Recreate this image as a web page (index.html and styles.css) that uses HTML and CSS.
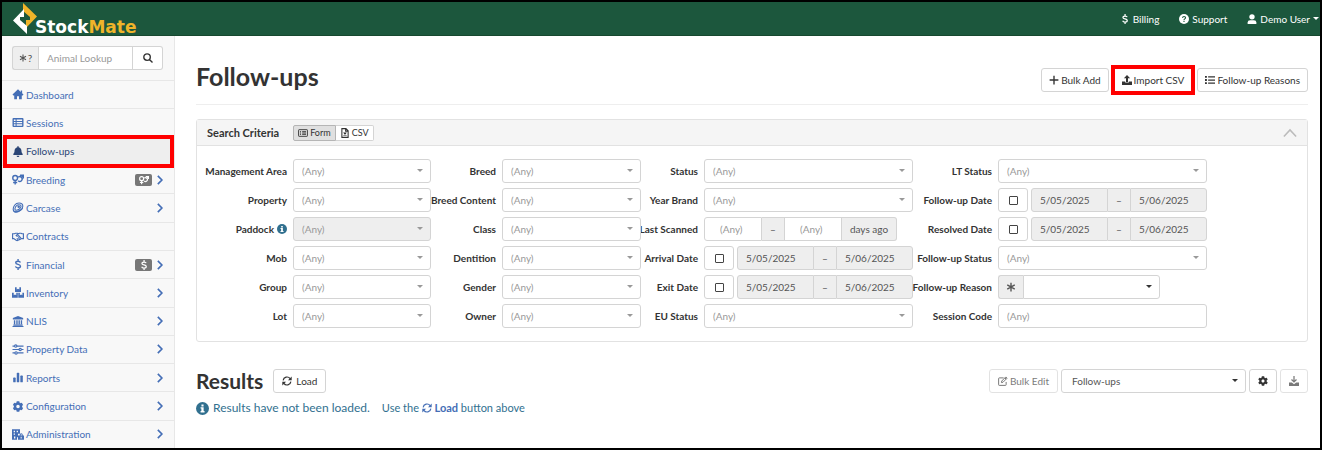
FILE: index.html
```html
<!DOCTYPE html>
<html lang="en">
<head>
<meta charset="utf-8">
<title>Follow-ups - StockMate</title>
<link rel="stylesheet" href="styles.css">
</head>
<body>
<svg class="sprite" aria-hidden="true">
  <symbol id="home" viewBox="0 0 16 16"><path d="M8 .5 0 8l1.200 1.300H2.500V15h4v-4.500h3V15h4V9.300h1.300L16 8l-2-1.900V2h-2v2.200z"/></symbol>
  <symbol id="table" viewBox="0 0 16 16"><path fill-rule="evenodd" d="M1.500 1.500h13q1.500 0 1.500 1.500v10q0 1.500-1.500 1.500h-13Q0 14.500 0 13V3q0-1.500 1.500-1.500zM2 3.700v2h2.500v-2zm4 0v2h8v-2zM2 7.200v2h2.500v-2zm4 0v2h8v-2zm-4 3.500v2h2.500v-2zm4 0v2h8v-2z"/></symbol>
  <symbol id="bell" viewBox="0 0 448 512"><path d="M224 512c35.320 0 63.970-28.650 63.970-64H160.030c0 35.350 28.650 64 63.970 64zm215.390-149.710c-19.320-20.760-55.470-51.990-55.470-154.290 0-77.700-54.480-139.900-127.940-155.160V32c0-17.670-14.320-32-31.980-32s-31.980 14.330-31.980 32v20.840C118.560 68.100 64.080 130.300 64.080 208c0 102.300-36.150 133.530-55.470 154.290-6 6.450-8.660 14.160-8.610 21.710.11 16.400 12.980 32 32.100 32h383.800c19.120 0 32-15.600 32.100-32 .05-7.550-2.610-15.270-8.610-21.710z"/></symbol>
  <symbol id="sexes" viewBox="0 0 19 16"><g fill="none" stroke="currentColor" stroke-width="2.200"><circle cx="5" cy="5.500" r="3.800"/><path d="M5 9v7M1.800 12.700h6.400M9.800 4.500a3.700 3.700 0 1 1 0 5.500M14.700 5 18 1.700M12.800 1.300H18v5"/></g></symbol>
  <symbol id="meat" viewBox="0 0 16 16"><g fill="none" stroke="currentColor" stroke-width="1.600"><path d="M1 10.500C1 7 3.500 1.500 9.500 1.500c3.500 0 5.500 2 5.500 4.500 0 4.500-6 8.500-10 8.500-2.500 0-4-1.500-4-4z"/><path d="M3.500 10C4 7.500 6 4 9.500 4c2 0 3 1 3 2.300C12.500 9 8.500 12 5.500 12c-1.300 0-2-.8-2-2z"/></g><circle cx="9" cy="7" r="1.800"/><path d="M1 11c1 3 5 3 8 1.500 3-1.500 5-3 6-5.500v2.500c-1 2.500-5 5.500-10 6-3 0-4-2-4-4.500z"/></symbol>
  <symbol id="shake" viewBox="0 0 20 16"><g fill="none" stroke="currentColor" stroke-width="1.900"><path d="M0 3.500h4l2-1h3l1.500 1 2-1H15l1.500 1H20M0 11.500h3l4 2.800q1.500 1 3 0l4-1.800 1.500-1H20M10.500 3.500 7 6.500q1.500 2 4 0l4.500 5M1 3.500v8M19 3.500v8M8 11l2 2M10.500 9.500l2 2.500"/></g></symbol>
  <symbol id="dollar" viewBox="0 0 16 16"><path fill="none" stroke="currentColor" stroke-width="2" d="M11.500 5C11 3.600 9.700 3.200 8.200 3.200 6 3.200 4.700 4.200 4.700 5.600 4.700 8.800 11.600 7 11.600 10.400c0 1.600-1.600 2.500-3.600 2.500-1.900 0-3.200-.7-3.700-2.200M8.100 0v3.500M8.100 12.500V16"/></symbol>
  <symbol id="boxes" viewBox="0 0 18 16"><path d="M4.500 0H7v3.500l2-1 2 1V0h2.500v7.300h-9zM0 8.500h2.600V12l1.900-1 1.900 1V8.500h2.300V16H0zM9.400 8.500h2.400V12l1.900-1 1.900 1V8.500H18V16H9.400z"/></symbol>
  <symbol id="bank" viewBox="0 0 16 16"><path d="M8 0 .5 3v2h15V3zM2 6h2v6H2zM5.500 6h2v6h-2zM8.700 6h2v6h-2zM12 6h2v6h-2zM1.200 12.300h13.600V14H1.200zM0 14.500h16V16H0z"/></symbol>
  <symbol id="sliders" viewBox="0 0 16 16"><g fill="none" stroke="currentColor" stroke-width="1.700"><path d="M0 3h3M6.500 3H16M0 8h9.500M13 8h3M0 13h3.500M7 13h9"/><circle cx="4.700" cy="3" r="1.700"/><circle cx="11.200" cy="8" r="1.700"/><circle cx="5.200" cy="13" r="1.700"/></g></symbol>
  <symbol id="bars" viewBox="0 0 16 16"><rect x="1" y="8" width="3.600" height="7" rx="1"/><rect x="6.200" y="1" width="3.600" height="14" rx="1"/><rect x="11.400" y="5" width="3.600" height="10" rx="1"/></symbol>
  <symbol id="cog" viewBox="0 0 512 512"><path d="M487.400 315.700l-42.600-24.600c4.300-23.200 4.300-47 0-70.200l42.600-24.600c4.900-2.800 7.100-8.600 5.500-14-11.100-35.600-30-67.800-54.700-94.600-3.800-4.100-10-5.100-14.800-2.300L380.800 110c-17.900-15.400-38.500-27.300-60.800-35.100V25.800c0-5.600-3.900-10.500-9.400-11.700-36.700-8.200-74.300-7.800-109.200 0-5.500 1.200-9.400 6.100-9.400 11.700V75c-22.200 7.900-42.800 19.800-60.800 35.100L88.700 85.500c-4.900-2.800-11-1.900-14.800 2.300-24.700 26.700-43.600 58.900-54.700 94.600-1.700 5.400.6 11.200 5.500 14L67.300 221c-4.300 23.200-4.300 47 0 70.200l-42.600 24.600c-4.900 2.800-7.100 8.600-5.500 14 11.100 35.600 30 67.800 54.700 94.600 3.800 4.100 10 5.100 14.800 2.300l42.600-24.600c17.900 15.400 38.500 27.300 60.800 35.100v49.200c0 5.600 3.900 10.500 9.400 11.700 36.700 8.200 74.300 7.800 109.200 0 5.500-1.200 9.400-6.100 9.400-11.700v-49.200c22.200-7.900 42.800-19.800 60.800-35.100l42.600 24.600c4.900 2.800 11 1.900 14.800-2.300 24.700-26.700 43.600-58.900 54.700-94.600 1.500-5.500-.7-11.300-5.600-14.100zM256 336c-44.100 0-80-35.900-80-80s35.900-80 80-80 80 35.900 80 80-35.900 80-80 80z"/></symbol>
  <symbol id="building" viewBox="0 0 18 16"><path fill-rule="evenodd" d="M0 0h12v7H9v5H7.500v4H0zM2.500 2.500v2h2v-2zm4.500 0v2h2v-2zM2.500 6.500v2h2v-2zM3 11v3h2v-3z"/><path fill-rule="evenodd" d="M10 9.500h1.500V8.500a2.300 2.300 0 0 1 4.600 0v1H18V16H9V9.500zm3 0h1.700v-1q0-.8-.8-.8t-.9.800zM13 11.500v2.500h1.500v-2.500z"/></symbol>
  <symbol id="right" viewBox="0 0 16 16"><path fill="none" stroke="currentColor" stroke-width="2.600" d="m4.500 1.500 6.500 6.500-6.500 6.500"/></symbol>
  <symbol id="up" viewBox="0 0 16 16"><path fill="none" stroke="currentColor" stroke-width="1.800" d="m1 12 7-7.500 7 7.500"/></symbol>
  <symbol id="search" viewBox="0 0 16 16"><path fill="none" stroke="currentColor" stroke-width="2.200" d="M11.700 6.500a5.200 5.200 0 1 1-10.400 0 5.200 5.200 0 0 1 10.400 0zM10.300 10.300l4.900 4.900"/></symbol>
  <symbol id="star" viewBox="0 0 16 16"><path fill="none" stroke="currentColor" stroke-width="2.200" d="M8 1v14M2 4.500l12 7M14 4.500l-12 7"/></symbol>
  <symbol id="help" viewBox="0 0 16 16"><circle cx="8" cy="8" r="8"/><path fill="none" stroke="#1c573d" stroke-width="1.800" d="M5.600 6.200C5.800 4.700 6.700 4 8 4c1.500 0 2.500.9 2.500 2.100C10.500 7.800 8 7.800 8 9.600M8 10.900v1.900"/></symbol>
  <symbol id="info" viewBox="0 0 16 16"><circle cx="8" cy="8" r="8"/><path fill="#fff" d="M6.700 3h2.600v2.400H6.700zM5.600 6.500h3.800v4.700h1.100v1.600H5.600v-1.600h1V8.100h-1z"/></symbol>
  <symbol id="user" viewBox="0 0 16 16"><circle cx="8" cy="4.500" r="4.300"/><path d="M1 16v-2.500Q1 9.800 5 9.800h6q4 0 4 3.700V16z"/></symbol>
  <symbol id="plus" viewBox="0 0 16 16"><path fill="none" stroke="currentColor" stroke-width="2.200" d="M8 1v14M1 8h14"/></symbol>
  <symbol id="upload" viewBox="0 0 16 16"><path d="M8 0l5 5H9.600v6H6.400V5H3zM0 10.500h5V12h6v-1.500h5V16H0z"/></symbol>
  <symbol id="download" viewBox="0 0 16 16"><path fill="none" stroke="currentColor" stroke-width="2" d="M8 0v9M4 5.500l4 4 4-4"/><path d="M0 10.500h4.500L8 13l3.500-2.500H16V16H0z"/></symbol>
  <symbol id="list" viewBox="0 0 16 16"><path d="M0 1.500h3v3H0zM5 2h11v2H5zM0 6.500h3v3H0zM5 7h11v2H5zM0 11.500h3v3H0zM5 12h11v2H5z"/></symbol>
  <symbol id="form" viewBox="0 0 18 16"><path fill="none" stroke="currentColor" stroke-width="1.600" d="M2 2h14q1 0 1 1v10q0 1-1 1H2q-1 0-1-1V3q0-1 1-1zM3.500 5.500h2M7.500 5.500h7M3.500 8h2M7.500 8h7M3.500 10.500h2M7.500 10.500h7"/></symbol>
  <symbol id="file" viewBox="0 0 16 16"><path fill="none" stroke="currentColor" stroke-width="1.700" d="M3 1h6.500L13 4.500V15H3zM9 1v4h4M6 7l4 5.500M10 7l-4 5.500"/></symbol>
  <symbol id="sync" viewBox="0 0 16 16"><path fill="none" stroke="currentColor" stroke-width="1.900" d="M1.800 7A6.200 6.200 0 0 1 13 4.300M14.200 9A6.200 6.200 0 0 1 3 11.700"/><path d="M15.500.8v6h-6zM.5 15.200v-6h6z"/></symbol>
  <symbol id="edit" viewBox="0 0 16 16"><path fill="none" stroke="currentColor" stroke-width="1.600" d="M9 3H2q-1 0-1 1v10q0 1 1 1h10q1 0 1-1V9.500M6 8l6.500-6.500 2 2L8 10l-2.500.5zM11 3l2 2"/></symbol>
</svg>

<header class="navbar">
  <a class="brand" href="#">
    <svg class="brand-mark" viewBox="0 0 24 31" aria-hidden="true">
      <path fill="#f0b429" d="M10 0 24 13.500 13 25v-8h4v-3l-7-6z"/>
      <path fill="#fff" d="M14 31 0 17.500 11 6v8H7v3l7 6z"/>
    </svg>
    <span class="brand-name">Stock<span class="gold">Mate</span></span>
  </a>
  <nav class="top-links">
    <a href="#"><svg class="icon"><use href="#dollar"/></svg>Billing</a>
    <a href="#"><svg class="icon"><use href="#help"/></svg>Support</a>
    <a class="user" href="#"><svg class="icon"><use href="#user"/></svg>Demo User<span class="caret"></span></a>
  </nav>
</header>

<div class="shell">
  <aside class="sidebar">
    <form class="lookup">
      <span class="addon"><svg class="icon"><use href="#star"/></svg>?</span>
      <input type="text" placeholder="Animal Lookup" aria-label="Animal Lookup">
      <button type="button" aria-label="Search"><svg class="icon"><use href="#search"/></svg></button>
    </form>
    <nav class="menu">
      <a href="#"><svg class="icon"><use href="#home"/></svg>Dashboard</a>
      <a href="#"><svg class="icon"><use href="#table"/></svg>Sessions</a>
      <a href="#" class="active marked"><svg class="icon"><use href="#bell"/></svg>Follow-ups</a>
      <a href="#"><svg class="icon"><use href="#sexes"/></svg>Breeding<span class="tag"><svg class="icon"><use href="#sexes"/></svg></span><svg class="icon arrow"><use href="#right"/></svg></a>
      <a href="#"><svg class="icon"><use href="#meat"/></svg>Carcase<svg class="icon arrow"><use href="#right"/></svg></a>
      <a href="#"><svg class="icon"><use href="#shake"/></svg>Contracts</a>
      <a href="#"><svg class="icon"><use href="#dollar"/></svg>Financial<span class="tag"><svg class="icon"><use href="#dollar"/></svg></span><svg class="icon arrow"><use href="#right"/></svg></a>
      <a href="#"><svg class="icon"><use href="#boxes"/></svg>Inventory<svg class="icon arrow"><use href="#right"/></svg></a>
      <a href="#"><svg class="icon"><use href="#bank"/></svg>NLIS<svg class="icon arrow"><use href="#right"/></svg></a>
      <a href="#"><svg class="icon"><use href="#sliders"/></svg>Property Data<svg class="icon arrow"><use href="#right"/></svg></a>
      <a href="#"><svg class="icon"><use href="#bars"/></svg>Reports<svg class="icon arrow"><use href="#right"/></svg></a>
      <a href="#"><svg class="icon"><use href="#cog"/></svg>Configuration<svg class="icon arrow"><use href="#right"/></svg></a>
      <a href="#"><svg class="icon"><use href="#building"/></svg>Administration<svg class="icon arrow"><use href="#right"/></svg></a>
    </nav>
  </aside>

  <main class="content">
    <div class="page-head">
      <h1>Follow-ups</h1>
      <div class="actions">
        <button class="btn" type="button"><svg class="icon"><use href="#plus"/></svg>Bulk Add</button>
        <button class="btn marked" type="button"><svg class="icon"><use href="#upload"/></svg>Import CSV</button>
        <button class="btn" type="button"><svg class="icon"><use href="#list"/></svg>Follow-up Reasons</button>
      </div>
    </div>

    <section class="panel">
      <div class="panel-head">
        <h2>Search Criteria</h2>
        <div class="toggle">
          <button type="button" class="on"><svg class="icon"><use href="#form"/></svg>Form</button>
          <button type="button"><svg class="icon"><use href="#file"/></svg>CSV</button>
        </div>
        <button class="collapse" type="button" aria-label="Collapse"><svg class="icon"><use href="#up"/></svg></button>
      </div>
      <form class="criteria">
        <div class="group g1">
          <label for="area">Management Area</label><div class="select"><select id="area"><option>(Any)</option></select></div>
          <label for="property">Property</label><div class="select"><select id="property"><option>(Any)</option></select></div>
          <label for="paddock">Paddock<svg class="icon info"><use href="#info"/></svg></label><div class="select"><select id="paddock" disabled><option>(Any)</option></select></div>
          <label for="mob">Mob</label><div class="select"><select id="mob"><option>(Any)</option></select></div>
          <label for="grp">Group</label><div class="select"><select id="grp"><option>(Any)</option></select></div>
          <label for="lot">Lot</label><div class="select"><select id="lot"><option>(Any)</option></select></div>
        </div>
        <div class="group g2">
          <label for="breed">Breed</label><div class="select"><select id="breed"><option>(Any)</option></select></div>
          <label for="breedc">Breed Content</label><div class="select"><select id="breedc"><option>(Any)</option></select></div>
          <label for="class">Class</label><div class="select"><select id="class"><option>(Any)</option></select></div>
          <label for="dent">Dentition</label><div class="select"><select id="dent"><option>(Any)</option></select></div>
          <label for="gender">Gender</label><div class="select"><select id="gender"><option>(Any)</option></select></div>
          <label for="owner">Owner</label><div class="select"><select id="owner"><option>(Any)</option></select></div>
        </div>
        <div class="group g3">
          <label for="status">Status</label><div class="select"><select id="status"><option>(Any)</option></select></div>
          <label for="year">Year Brand</label><div class="select"><select id="year"><option>(Any)</option></select></div>
          <label for="scan">Last Scanned</label>
          <div class="joined days"><input id="scan" type="text" placeholder="(Any)"><span class="addon">–</span><input type="text" placeholder="(Any)" aria-label="Last scanned to"><span class="addon">days ago</span></div>
          <label for="arr">Arrival Date</label>
          <div class="dates"><label class="tick"><input id="arr" type="checkbox"></label><div class="joined"><input type="text" value="5/05/2025" aria-label="Arrival from" disabled><span class="addon">–</span><input type="text" value="5/06/2025" aria-label="Arrival to" disabled></div></div>
          <label for="exit">Exit Date</label>
          <div class="dates"><label class="tick"><input id="exit" type="checkbox"></label><div class="joined"><input type="text" value="5/05/2025" aria-label="Exit from" disabled><span class="addon">–</span><input type="text" value="5/06/2025" aria-label="Exit to" disabled></div></div>
          <label for="eu">EU Status</label><div class="select"><select id="eu"><option>(Any)</option></select></div>
        </div>
        <div class="group g4">
          <label for="lt">LT Status</label><div class="select"><select id="lt"><option>(Any)</option></select></div>
          <label for="fud">Follow-up Date</label>
          <div class="dates"><label class="tick"><input id="fud" type="checkbox"></label><div class="joined"><input type="text" value="5/05/2025" aria-label="Follow-up from" disabled><span class="addon">–</span><input type="text" value="5/06/2025" aria-label="Follow-up to" disabled></div></div>
          <label for="res">Resolved Date</label>
          <div class="dates"><label class="tick"><input id="res" type="checkbox"></label><div class="joined"><input type="text" value="5/05/2025" aria-label="Resolved from" disabled><span class="addon">–</span><input type="text" value="5/06/2025" aria-label="Resolved to" disabled></div></div>
          <label for="fus">Follow-up Status</label><div class="select"><select id="fus"><option>(Any)</option></select></div>
          <label for="reason">Follow-up Reason</label>
          <div class="joined reason"><span class="addon"><svg class="icon"><use href="#star"/></svg></span><div class="select dark"><select id="reason"><option></option></select></div></div>
          <label for="code">Session Code</label><input id="code" class="field" type="text" placeholder="(Any)">
        </div>
      </form>
    </section>

    <div class="results-head">
      <h2>Results</h2>
      <button class="btn load" type="button"><svg class="icon"><use href="#sync"/></svg>Load</button>
      <div class="tools">
        <button class="btn" type="button" disabled><svg class="icon"><use href="#edit"/></svg>Bulk Edit</button>
        <div class="select dark view"><select aria-label="View"><option>Follow-ups</option></select></div>
        <button class="btn square" type="button" aria-label="Settings"><svg class="icon"><use href="#cog"/></svg></button>
        <button class="btn square" type="button" aria-label="Download" disabled><svg class="icon"><use href="#download"/></svg></button>
      </div>
    </div>
    <p class="notice"><svg class="icon info"><use href="#info"/></svg><span>Results have not been loaded.</span><small>Use the <a href="#"><svg class="icon"><use href="#sync"/></svg> Load</a> button above</small></p>
  </main>
</div>
</body>
</html>
```

FILE: styles.css
```css
* { box-sizing: border-box; }

body {
  margin: 0;
  min-height: 100vh;
  display: flex;
  flex-direction: column;
  border: 2px solid #000;
  background: #fff;
  color: #333;
  font: 10px/16px Lato, "Open Sans", sans-serif;
}

.sprite { display: none; }
a { color: #446eb6; text-decoration: none; }
h1, h2, p { margin: 0; }
input, select, button { font: inherit; color: inherit; margin: 0; }
button { cursor: pointer; }

.icon { width: 10px; height: 10px; flex: none; fill: currentColor; }

.caret { border: 3px solid transparent; border-top-color: currentColor; border-bottom: 0; }

/* Top bar */
.navbar {
  display: flex;
  justify-content: space-between;
  align-items: center;
  height: 34px;
  flex: none;
  padding-left: 11px;
  background: #1c573d;
  border-bottom: 1px solid #17482f;
}
.brand { display: flex; align-items: flex-end; color: #fff; }
.brand-mark { width: 24px; height: 31px; }
.brand-name { margin-left: -2px; font: bold 17px/14px "DejaVu Sans", sans-serif; }
.gold { color: #f0b429; }
.top-links { display: flex; gap: 20px; }
.top-links a { display: flex; align-items: center; gap: 3px; color: #fff; }
.top-links .caret { margin-right: 1px; }

/* Sidebar */
.shell { display: flex; flex: 1; }
.sidebar {
  display: flex;
  flex-direction: column;
  flex: none;
  width: 173px;
  background: #f8f8f8;
  border-right: 1px solid #e7e7e7;
}
.lookup { display: flex; height: 24px; margin: 10px 11px 10px 10px; }
.lookup input { flex: 1; min-width: 0; padding: 0 8px; border: 1px solid #d4d4d4; }
.lookup button {
  display: grid;
  place-items: center;
  width: 30px;
  padding: 0;
  border: 1px solid #d4d4d4;
  border-left: 0;
  border-radius: 0 3px 3px 0;
  background: #fff;
}
.lookup .addon { width: 26px; gap: 1px; border-right: 0; border-radius: 3px 0 0 3px; }
.lookup .addon .icon { width: 8px; height: 8px; }

.menu { display: flex; flex-direction: column; flex: 1; }
.menu a {
  position: relative;
  display: flex;
  align-items: center;
  flex: 1;
  gap: 2px;
  min-height: 28px;
  padding: 0 9px 0 10px;
  border-top: 1px solid #e7e7e7;
}
.menu a > .icon:first-child { width: 12px; height: 11px; }
.menu .active { background: #eee; color: #2a4575; }
.menu .arrow { width: 10px; height: 10px; margin-left: auto; }
.tag {
  display: grid;
  place-items: center;
  width: 17px;
  height: 12px;
  margin-left: auto;
  border-radius: 2px;
  background: #777;
  color: #fff;
}
.tag + .arrow { margin-left: 1px; }

.marked { position: relative; }
.marked::after { content: ""; position: absolute; inset: -4px -2px; border: 4px solid #f00; }
.menu .marked { z-index: 1; }
.menu .marked::after { inset: -3px 0 -3px 1px; }

/* Page heading */
.content { flex: 1; min-width: 0; padding: 0 12px 24px 21px; }
.page-head {
  display: flex;
  justify-content: space-between;
  align-items: center;
  padding: 23px 0 10px;
  border-bottom: 1px solid #eee;
}
h1 { font-size: 25px; line-height: 35px; }
.page-head .actions { padding-top: 6px; }
.actions, .tools { display: flex; gap: 3px; }

.btn {
  display: flex;
  align-items: center;
  justify-content: center;
  gap: 2px;
  height: 24px;
  padding: 0 8px;
  border: 1px solid #d4d4d4;
  border-radius: 3px;
  background: #fff;
  white-space: nowrap;
}
.page-head .btn { padding: 0 7px; }
.page-head .marked { padding: 0 9px; }
.btn:disabled { opacity: 0.65; }
.square { width: 28px; padding: 0; }

/* Search criteria */
.panel { margin-top: 14px; border: 1px solid #e2e2e2; border-radius: 3px; }
.panel-head {
  display: flex;
  align-items: center;
  height: 26px;
  padding: 0 10px;
  background: #f5f5f5;
  border-bottom: 1px solid #e2e2e2;
}
.panel-head h2 { font-size: 11px; }
.toggle { display: flex; margin-left: 14px; }
.toggle button {
  display: flex;
  align-items: center;
  gap: 2px;
  height: 16px;
  padding: 0 4px;
  border: 1px solid #d4d4d4;
  border-left: 0;
  border-radius: 0 2px 2px 0;
  background: #fff;
  font-size: 9px;
  line-height: 12px;
}
.toggle .on { background: #e0e0e0; border: 1px solid #b5b5b5; border-radius: 2px 0 0 2px; }
.collapse { margin-left: auto; padding: 0; border: 0; background: none; color: #bbb; line-height: 0; }
.collapse .icon { width: 14px; height: 14px; }

.criteria {
  display: grid;
  grid-template-columns: 234fr 210fr 272fr 294fr;
  padding: 13px 100px 13px 0;
}
.group { display: grid; gap: 5px 6px; align-content: start; grid-auto-rows: 24px; align-items: center; }
.g1 { grid-template-columns: 90px 1fr; }
.g2 { grid-template-columns: 65px 1fr; }
.g3 { grid-template-columns: 57px 1fr; }
.g4 { grid-template-columns: 79px 1fr; }
.group > label {
  display: flex;
  align-items: center;
  justify-content: flex-end;
  gap: 3px;
  font-weight: bold;
  white-space: nowrap;
}
.info { color: #31708f; }

.select { position: relative; min-width: 0; }
.select::after {
  content: "";
  position: absolute;
  right: 8px;
  top: 10px;
  border: 3px solid transparent;
  border-top-color: #999;
  border-bottom: 0;
  pointer-events: none;
}
.select select, .field {
  display: block;
  appearance: none;
  width: 100%;
  height: 24px;
  padding: 0 8px;
  border: 1px solid #d4d4d4;
  border-radius: 3px;
  background: #fff;
  color: #999;
  opacity: 1;
}
.dark::after { border-top-color: #333; }
.dark select { color: #555; }
.select select:disabled { background: #eee; }
::placeholder { color: #999; opacity: 1; }

.addon {
  display: flex;
  align-items: center;
  justify-content: center;
  flex: none;
  border: 1px solid #d4d4d4;
  background: #eee;
  color: #555;
}
.joined { display: flex; height: 24px; min-width: 0; flex: 1; }
.joined > input {
  flex: 1;
  width: 0;
  min-width: 0;
  padding: 0 8px;
  border: 1px solid #d4d4d4;
  border-radius: 0;
  background: #fff;
  color: #555;
}
.joined > input:disabled { background: #eee; }
.joined > :first-child { border-radius: 3px 0 0 3px; }
.joined > :last-child { border-radius: 0 3px 3px 0; }
.joined > .addon { width: 22px; border-width: 1px 0; }
.days { margin-right: 16px; }
.days > input { padding: 0 15px; }
.days > .addon:last-child { width: 55px; border-width: 1px 1px 1px 0; }
.reason { margin-right: 47px; }
.reason > .addon { width: 25px; border-left-width: 1px; }
.reason > .select { flex: 1; }
.reason select { border-radius: 0 3px 3px 0; }
.dates { display: flex; gap: 3px; }
.tick {
  display: grid;
  place-items: center;
  width: 30px;
  height: 24px;
  border: 1px solid #d4d4d4;
  border-radius: 3px;
}
.tick input { appearance: none; width: 9px; height: 9px; border: 1px solid #444; border-radius: 1px; }

/* Results */
.results-head { display: flex; align-items: center; margin-top: 27px; }
.results-head h2 { font-size: 21px; line-height: 24px; }
.load { gap: 4px; margin-left: 10px; }
.tools { margin-left: auto; }
.view { width: 185px; }
.view select { padding: 0 10px; }
.notice { display: flex; align-items: center; gap: 4px; margin-top: 7px; color: #31708f; font-size: 12px; }
.notice > .info { width: 13px; height: 13px; }
.notice small { margin-left: 8px; font-size: 11px; }
.notice a { font-weight: bold; }
.notice a .icon { vertical-align: -1px; }
```
